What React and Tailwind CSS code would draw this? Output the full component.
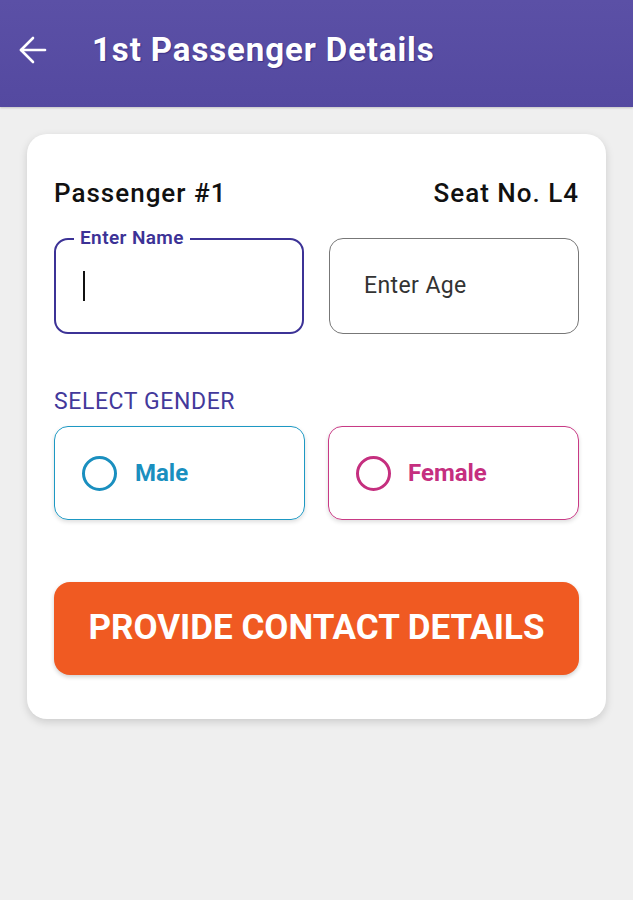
import React, { useState } from 'react';

export default function App() {
    const [gender, setGender] = useState(null);

    return (
        <div className="min-h-[900px] bg-[#efefef] font-['Roboto',sans-serif]">
            <div className="h-[107px] bg-gradient-to-b from-[#5b50a6] to-[#5449a0] pt-[27px] px-[18px] shadow-[0_1px_2px_#00000030]">
                <div className="flex items-center h-[46px]">
                    <svg width="30" height="30" viewBox="0 0 30 30" fill="none" stroke="white" strokeWidth="2.6" strokeLinecap="round" strokeLinejoin="round">
                        <path d="M27 15H3" />
                        <path d="M15 3L3 15l12 12" />
                    </svg>
                    <h1 className="ml-[44px] text-white text-[33px] font-bold tracking-[0.9px] [text-shadow:1px_1px_1px_#1e167080]">1st Passenger Details</h1>
                </div>
            </div>

            <div className="mx-[27px] mt-[27px] rounded-[20px] bg-white px-[27px] pt-[44px] pb-[44px] shadow-[0_3px_8px_#00000026]">
                <div className="flex items-center justify-between h-[30px] text-[26px] font-medium tracking-[1px] text-[#111]">
                    <span>Passenger #1</span>
                    <span>Seat No. L4</span>
                </div>

                <div className="grid grid-cols-2 gap-[25px] mt-[30px]">
                    <div className="relative h-[96px] rounded-[14px] border-2 border-[#3c3296] flex items-center pl-[27px]">
                        <span className="absolute -top-[13px] left-[18px] bg-white px-[6px] text-[19px] leading-[22px] font-semibold tracking-[0.4px] text-[#3c3296]">Enter Name</span>
                        <div className="w-[2px] h-[30px] bg-[#111]"></div>
                    </div>
                    <div className="h-[96px] rounded-[14px] border border-[#777] flex items-center pl-[34px] text-[23px] tracking-[0.4px] text-[#333]">
                        Enter Age
                    </div>
                </div>

                <div className="mt-[56px] text-[23px] leading-[24px] tracking-[0.6px] text-[#43399b]">SELECT GENDER</div>

                <div className="grid grid-cols-2 gap-[23px] mt-[12px]">
                    <div onClick={() => setGender('male')} className="h-[94px] rounded-[14px] border-[1.5px] border-[#1d98c3] flex items-center pl-[27px] shadow-[0_2px_4px_#00000022] cursor-pointer">
                        <div className="w-[35px] h-[35px] rounded-full border-[3px] border-[#1a8fbf] flex items-center justify-center">
                            {gender === 'male' && <div className="w-[17px] h-[17px] rounded-full bg-[#1a8fbf]"></div>}
                        </div>
                        <span className="ml-[18px] text-[24px] font-bold text-[#1a8fbf]">Male</span>
                    </div>
                    <div onClick={() => setGender('female')} className="h-[94px] rounded-[14px] border-[1.5px] border-[#c83a85] flex items-center pl-[27px] shadow-[0_2px_4px_#00000022] cursor-pointer">
                        <div className="w-[35px] h-[35px] rounded-full border-[3px] border-[#c52f7f] flex items-center justify-center">
                            {gender === 'female' && <div className="w-[17px] h-[17px] rounded-full bg-[#c52f7f]"></div>}
                        </div>
                        <span className="ml-[17px] text-[24px] font-bold text-[#c52f7f]">Female</span>
                    </div>
                </div>

                <button className="mt-[62px] w-full h-[93px] rounded-[16px] bg-[#f05a22] text-white text-[35px] font-bold shadow-[0_2px_4px_#00000030]">
                    PROVIDE CONTACT DETAILS
                </button>
            </div>
        </div>
    );
}
